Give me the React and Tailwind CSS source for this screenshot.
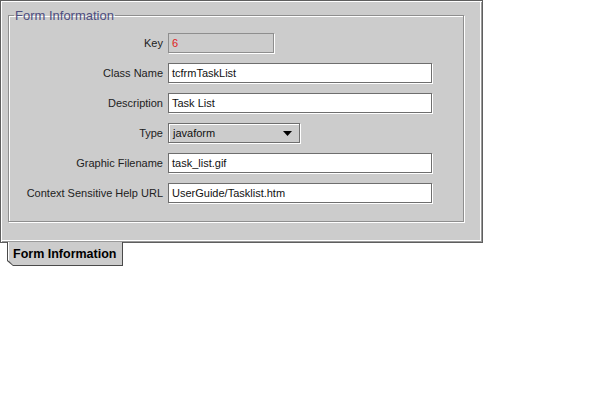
import React from 'react'

const rows = [
  { label: 'Key', value: '6', kind: 'key' },
  { label: 'Class Name', value: 'tcfrmTaskList', kind: 'text' },
  { label: 'Description', value: 'Task List', kind: 'text' },
  { label: 'Type', value: 'javaform', kind: 'combo' },
  { label: 'Graphic Filename', value: 'task_list.gif', kind: 'text' },
  { label: 'Context Sensitive Help URL', value: 'UserGuide/Tasklist.htm', kind: 'text' },
]

function Field({ row }) {
  if (row.kind === 'key') {
    return (
      <div className="w-[106px] h-[20px] border border-[#8e8e8e] shadow-[1px_1px_0_#ffffff] bg-[#cccccc] flex items-center px-[3px] text-[#e02020]">
        {row.value}
      </div>
    )
  }
  if (row.kind === 'combo') {
    return (
      <div className="w-[132px] h-[20px] border border-[#6e6e6e] shadow-[1px_1px_0_#ffffff,inset_1px_1px_0_#ffffff] bg-[#cccccc] flex items-center justify-between pl-[4px] pr-[7px] text-[#111]">
        <span>{row.value}</span>
        <svg width="9" height="5" viewBox="0 0 9 5">
          <path d="M0 0 H9 L4.5 5 Z" fill="#000" />
        </svg>
      </div>
    )
  }
  return (
    <div className="w-[264px] h-[20px] border border-[#6e6e6e] shadow-[1px_1px_0_#ffffff] bg-white flex items-center px-[3px] text-[#111]">
      {row.value}
    </div>
  )
}

export default function App() {
  return (
    <div className="w-[597px] h-[399px] bg-white font-['Liberation_Sans',Arial,sans-serif] text-[11px]">
      {/* outer tab panel */}
      <div className="w-[483px] h-[243px] bg-[#cccccc] border border-[#5e5e5e] shadow-[inset_1px_1px_0_#ffffff,inset_-1px_-1px_0_#9a9a9a,inset_-2px_-2px_0_#ffffff] pl-[7px] pt-[7px]">
        <fieldset className="w-[456px] h-[214px] border border-[#8e8e8e] shadow-[inset_1px_1px_0_#ffffff,1px_1px_0_#ffffff] px-0 pb-0">
          <legend className="ml-[5px] px-[1px] text-[13px] leading-[15px] text-[#4d4d80]">Form Information</legend>
          <div className="grid grid-cols-[154px_1fr] gap-x-[5px] gap-y-[10px] pt-[10px] items-center">
            {rows.map(r => (
              <React.Fragment key={r.label}>
                <div className="text-right text-[#222] leading-[18px]">{r.label}</div>
                <Field row={r} />
              </React.Fragment>
            ))}
          </div>
        </fieldset>
      </div>

      {/* tab */}
      <div className="ml-[7px] -mt-[1px] w-[116px] h-[24px] bg-[#4a4a4a] [clip-path:polygon(0_0,100%_0,100%_100%,6px_100%,0_calc(100%-5px))]">
        <div className="ml-[1px] w-[114px] h-[23px] bg-[#cccccc] [clip-path:polygon(0_0,100%_0,100%_100%,5px_100%,0_calc(100%-5px))] shadow-[inset_1px_0_0_#ffffff] flex items-center pl-[5px] pt-[1px] text-[12.5px] font-bold text-black">
          Form Information
        </div>
      </div>
    </div>
  )
}
